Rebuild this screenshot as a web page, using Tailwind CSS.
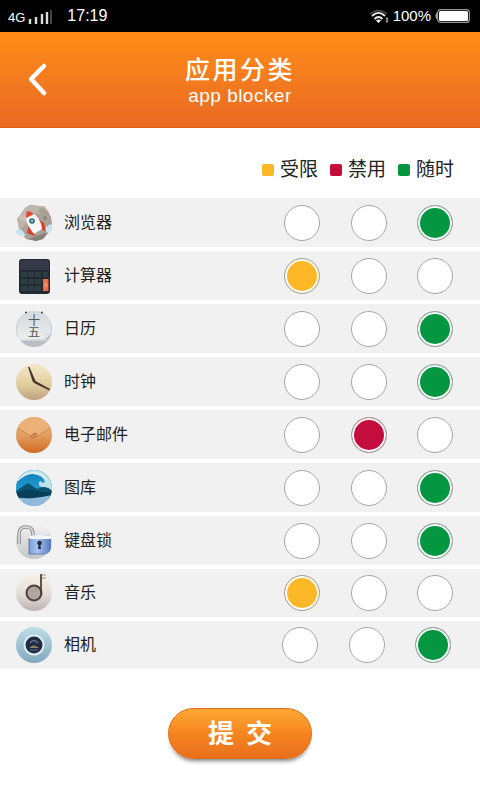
<!DOCTYPE html>
<html lang="zh-CN">
<head>
    <meta charset="UTF-8">
    <meta name="viewport" content="width=device-width, initial-scale=1.0">
    <title>应用分类</title>
    <script src="https://cdn.jsdelivr.net/npm/@tailwindcss/browser@4"></script>
</head>
<body class="min-h-screen bg-white font-['Liberation_Sans','Noto_Sans_CJK_SC',sans-serif] text-[#222]">

    <!-- Status bar -->
    <div class="flex h-8 items-center justify-between bg-black pl-2 pr-[10px] text-white">
        <div class="flex items-center">
            <span class="pt-1 text-[13px] leading-4">4G</span>
            <svg class="ml-[3px] h-4 w-6" viewBox="0 0 24 16">
                <path d="M2 16V11M8 16V9M14 16V6M19 16V4" stroke="#ddd" stroke-width="2.4"></path>
                <path d="M23 16V2" stroke="#555" stroke-width="1.6"></path>
            </svg>
            <span class="ml-[15px] text-base leading-5">17:19</span>
        </div>
        <div class="flex items-center">
            <svg class="h-[14px] w-5" viewBox="0 0 20 14" fill="none">
                <path d="M1 5Q9.500 -2 18 5" stroke="#555" stroke-width="1.500"></path>
                <path d="M3 7Q9.500 .800 16 7" stroke="#eee" stroke-width="1.800"></path>
                <path d="M5.500 10Q9.500 6 13.500 10" stroke="#eee" stroke-width="1.800"></path>
                <path d="M7 11.500Q9.500 9.500 12 11.500L9.500 14Z" fill="#fff"></path>
                <path d="M16.500 10.500L18 8L19.500 10.500ZM16.500 11.500L18 14L19.500 11.500Z" fill="#ccc"></path>
            </svg>
            <span class="ml-1 text-[15px] leading-5">100%</span>
            <svg class="ml-1 h-[14px] w-[35px]" viewBox="0 0 35 14">
                <path d="M3 4H1.500Q.500 4 .500 7T1.500 10H3Z" fill="#aaa"></path>
                <rect x="2.600" y=".6" width="31.800" height="12.800" rx="3" fill="none" stroke="#999" stroke-width="1.200"></rect>
                <rect x="4" y="2" width="29" height="10" rx="1.500" fill="#fff"></rect>
            </svg>
        </div>
    </div>

    <!-- Header -->
    <header class="grid h-24 grid-cols-[1fr_auto_1fr] items-center border-b border-[#e05f14] bg-linear-to-b from-[#ff8c17] to-[#e96a23] text-white">
        <button type="button" aria-label="返回" class="ml-6 w-7">
            <svg class="h-9 w-7" viewBox="0 0 28 36" fill="none" stroke="#fff" stroke-width="4.500" stroke-linecap="round" stroke-linejoin="round"><path d="M20 4L7 17L20 31"></path></svg>
        </button>
        <div class="pt-1 text-center">
            <h1 class="text-[25px] leading-7 font-medium tracking-widest">应用分类</h1>
            <p class="text-[19px] leading-6 tracking-wide">app blocker</p>
        </div>
    </header>

    <main>
        <!-- Legend -->
        <div class="flex h-[70px] items-center justify-end gap-3 pr-[26px] pt-[14px] text-[19px] leading-7">
            <span class="flex items-center gap-1.5"><i class="size-3 rounded-xs bg-[#fdb827]"></i>受限</span>
            <span class="flex items-center gap-1.5"><i class="size-3 rounded-xs bg-[#c40d3c]"></i>禁用</span>
            <span class="flex items-center gap-1.5"><i class="size-3 rounded-xs bg-[#049641]"></i>随时</span>
        </div>

        <form>
            <div class="flex flex-col gap-1">
                <div role="radiogroup" class="flex h-[49px] items-center justify-between bg-[#f1f1f1] pl-4 pr-[27px]" aria-label="浏览器">
                    <div class="flex items-center gap-3">
                        <svg class="size-9" viewBox="0 0 36 36">
                            <path d="M9 3L14 0L23 1L28 1L32 6L35 12L36 19L33 27L27 34L20 36L10 34L6 29L3 26L3 20L1 14L5 9Z" fill="#aaa198"></path>
                            <path d="M9 3L14 0L23 1L28 1L31 5L26 9L18 8L12 15L8 22L3 24L1 14L5 9Z" fill="#beb5aa"></path>
                            <circle cx="26" cy="6" r="3" fill="#a89e92"></circle><circle cx="7" cy="13" r="3" fill="#cac1b6"></circle><circle cx="29" cy="13" r="2" fill="#8f877f"></circle><path d="M12 34L26 29L33 26L27 34L20 36Z" fill="#88817b"></path>
                            <path d="M0 28Q0 24 4 24Q7 25 8 28Q10 29 9 31L4 31ZM29 25Q29 21 32 21Q33 18 36 20V25Q32 29 29 27Z" fill="#c9e3ec"></path>
                            <path d="M13 19L11 28L19 31L18 26ZM22 14L28 18L30 27L24 23Z" fill="#dc3d28"></path>
                            <path d="M11 6Q18 7 22 13Q26 19 26 24L18 29Q12 22 10 15Q10 10 11 6Z" fill="#f6f6f6"></path>
                            <path d="M11 6Q15 6 18 9L10 13Q10 9 11 6Z" fill="#e2432d"></path>
                            <circle cx="16" cy="16" r="2.800" fill="#315c71"></circle><circle cx="16" cy="16" r="1.400" fill="#8ec0d2"></circle>
                        </svg>
                        <span class="text-base leading-6">浏览器</span>
                    </div>
                    <div class="flex w-[169px] justify-between">
                        <input type="radio" name="browser" aria-label="受限" class="size-9 appearance-none rounded-full border border-[#a6a6a6] bg-white checked:bg-[#fdb827] checked:shadow-[inset_0_0_0_2px_#fff]">
                        <input type="radio" name="browser" aria-label="禁用" class="size-9 appearance-none rounded-full border border-[#a6a6a6] bg-white checked:bg-[#c40d3c] checked:shadow-[inset_0_0_0_2px_#fff]">
                        <input type="radio" name="browser" aria-label="随时" checked class="size-9 appearance-none rounded-full border border-[#a6a6a6] bg-white checked:bg-[#049641] checked:shadow-[inset_0_0_0_2px_#fff]">
                    </div>
                </div>

                <div role="radiogroup" class="flex h-[49px] items-center justify-between bg-[#f1f1f1] pl-4 pr-[27px]" aria-label="计算器">
                    <div class="flex items-center gap-3">
                        <svg class="size-9" viewBox="0 0 36 36">
                            <rect x="3" y="1" width="31" height="35" rx="3" fill="#202b32"></rect>
                            <path d="M4 12V5Q4 2 7 2H30Q33 2 33 5V12Z" fill="#353849"></path>
                            <path d="M5 14H11V19H5ZM12 14H18V19H12ZM19 14H25V19H19ZM27 14H32V19H27ZM5 21H11V26H5ZM12 21H18V26H12ZM19 21H25V26H19ZM5 28H11V33H5ZM12 28H18V33H12ZM19 28H25V33H19Z" fill="#2d3d43"></path>
                            <rect x="27" y="21" width="5.500" height="12" fill="#f26b43"></rect>
                            <path d="M28.500 26H31M28.500 28H31" stroke="#ffd3bf" stroke-width=".8"></path>
                        </svg>
                        <span class="text-base leading-6">计算器</span>
                    </div>
                    <div class="flex w-[169px] justify-between">
                        <input type="radio" name="calculator" aria-label="受限" checked class="size-9 appearance-none rounded-full border border-[#a6a6a6] bg-white checked:bg-[#fdb827] checked:shadow-[inset_0_0_0_2px_#fff]">
                        <input type="radio" name="calculator" aria-label="禁用" class="size-9 appearance-none rounded-full border border-[#a6a6a6] bg-white checked:bg-[#c40d3c] checked:shadow-[inset_0_0_0_2px_#fff]">
                        <input type="radio" name="calculator" aria-label="随时" class="size-9 appearance-none rounded-full border border-[#a6a6a6] bg-white checked:bg-[#049641] checked:shadow-[inset_0_0_0_2px_#fff]">
                    </div>
                </div>

                <div role="radiogroup" class="flex h-[49px] items-center justify-between bg-[#f1f1f1] pl-4 pr-[27px]" aria-label="日历">
                    <div class="flex items-center gap-3">
                        <svg class="size-9" viewBox="0 0 36 36">
                            <defs><linearGradient id="cal" x2="0" y2="1"><stop stop-color="#d3d8dd"></stop><stop offset="1" stop-color="#eceeef"></stop></linearGradient></defs>
                            <circle cx="18" cy="18" r="18" fill="#b9bfc4"></circle>
                            <path d="M2.500 27Q-2 16 4 7Q9 0 18 0T32 7Q37 15 34.500 23L30 28L4 29Z" fill="url(#cal)"></path>
                            <path d="M30 28L30 23L34.500 23Z" fill="#fafafa" stroke="#aaa" stroke-width=".5"></path>
                            <path d="M3 29H31" stroke="#e4e7e9" stroke-width="1"></path>
                            <circle cx="10" cy="1.500" r="1" fill="#444"></circle><circle cx="26" cy="1.500" r="1" fill="#444"></circle>
                            <text x="18" y="3" writing-mode="vertical-rl" font-size="12" font-family="Noto Sans CJK SC" fill="#555">十五</text>
                        </svg>
                        <span class="text-base leading-6">日历</span>
                    </div>
                    <div class="flex w-[169px] justify-between">
                        <input type="radio" name="calendar" aria-label="受限" class="size-9 appearance-none rounded-full border border-[#a6a6a6] bg-white checked:bg-[#fdb827] checked:shadow-[inset_0_0_0_2px_#fff]">
                        <input type="radio" name="calendar" aria-label="禁用" class="size-9 appearance-none rounded-full border border-[#a6a6a6] bg-white checked:bg-[#c40d3c] checked:shadow-[inset_0_0_0_2px_#fff]">
                        <input type="radio" name="calendar" aria-label="随时" checked class="size-9 appearance-none rounded-full border border-[#a6a6a6] bg-white checked:bg-[#049641] checked:shadow-[inset_0_0_0_2px_#fff]">
                    </div>
                </div>

                <div role="radiogroup" class="flex h-[49px] items-center justify-between bg-[#f1f1f1] pl-4 pr-[27px]" aria-label="时钟">
                    <div class="flex items-center gap-3">
                        <svg class="size-9" viewBox="0 0 36 36">
                            <defs><linearGradient id="clk" x2="0" y2="1"><stop stop-color="#f3e8c8"></stop><stop offset=".55" stop-color="#e2cfa0"></stop><stop offset="1" stop-color="#bfa180"></stop></linearGradient></defs>
                            <circle cx="18" cy="18" r="18" fill="url(#clk)"></circle>
                            <path d="M12 3L13.500 3L19.500 17L34 25L33.500 26.500L18 19L16.500 17Z" fill="#46352c"></path>
                        </svg>
                        <span class="text-base leading-6">时钟</span>
                    </div>
                    <div class="flex w-[169px] justify-between">
                        <input type="radio" name="clock" aria-label="受限" class="size-9 appearance-none rounded-full border border-[#a6a6a6] bg-white checked:bg-[#fdb827] checked:shadow-[inset_0_0_0_2px_#fff]">
                        <input type="radio" name="clock" aria-label="禁用" class="size-9 appearance-none rounded-full border border-[#a6a6a6] bg-white checked:bg-[#c40d3c] checked:shadow-[inset_0_0_0_2px_#fff]">
                        <input type="radio" name="clock" aria-label="随时" checked class="size-9 appearance-none rounded-full border border-[#a6a6a6] bg-white checked:bg-[#049641] checked:shadow-[inset_0_0_0_2px_#fff]">
                    </div>
                </div>

                <div role="radiogroup" class="flex h-[49px] items-center justify-between bg-[#f1f1f1] pl-4 pr-[27px]" aria-label="电子邮件">
                    <div class="flex items-center gap-3">
                        <svg class="size-9" viewBox="0 0 36 36">
                            <defs><linearGradient id="mail" x2="0" y2="1"><stop stop-color="#e5a469"></stop><stop offset=".5" stop-color="#e2a062"></stop><stop offset="1" stop-color="#cf6a20"></stop></linearGradient></defs>
                            <circle cx="18" cy="18" r="18" fill="url(#mail)"></circle>
                            <path d="M2 11Q8 0 18 0T34 11L20 19Q18 20.500 16 19Z" fill="#ebb178"></path>
                            <path d="M2 11L16 20Q18 21 20 20L34 11" fill="none" stroke="#ca8448" stroke-width=".7"></path>
                            <ellipse cx="18" cy="18.500" rx="3.500" ry="2" transform="rotate(-35 18 18.500)" fill="#b9783f"></ellipse>
                            <path d="M16 19.500L20 17.500" stroke="#edbe8e" stroke-width=".8"></path>
                        </svg>
                        <span class="text-base leading-6">电子邮件</span>
                    </div>
                    <div class="flex w-[169px] justify-between">
                        <input type="radio" name="mail" aria-label="受限" class="size-9 appearance-none rounded-full border border-[#a6a6a6] bg-white checked:bg-[#fdb827] checked:shadow-[inset_0_0_0_2px_#fff]">
                        <input type="radio" name="mail" aria-label="禁用" checked class="size-9 appearance-none rounded-full border border-[#a6a6a6] bg-white checked:bg-[#c40d3c] checked:shadow-[inset_0_0_0_2px_#fff]">
                        <input type="radio" name="mail" aria-label="随时" class="size-9 appearance-none rounded-full border border-[#a6a6a6] bg-white checked:bg-[#049641] checked:shadow-[inset_0_0_0_2px_#fff]">
                    </div>
                </div>

                <div role="radiogroup" class="flex h-[49px] items-center justify-between bg-[#f1f1f1] pl-4 pr-[27px]" aria-label="图库">
                    <div class="flex items-center gap-3">
                        <svg class="size-9" viewBox="0 0 36 36">
                            <defs><clipPath id="pic"><circle cx="18" cy="18" r="18"></circle></clipPath><linearGradient id="sky" x2="0" y2="1"><stop stop-color="#117fc0"></stop><stop offset="1" stop-color="#29a4cf"></stop></linearGradient></defs>
                            <g clip-path="url(#pic)">
                                <rect width="36" height="36" fill="#8eb9dc"></rect>
                                <rect width="36" height="27" fill="url(#sky)"></rect>
                                <path d="M0 12Q6 3 17 4Q27 5 29 12L26 13Q26 10 23 12Q22 16 26 17Q32 17 36 24V0H0Z" fill="#bfe1e8"></path>
                                <path d="M1 11Q10 2 19 3Q27 4 31 10" fill="none" stroke="#e2f2f3" stroke-width="1.500"></path>
                                <path d="M0 21L12 13L21 19L27 17Q33 17 36 21V28H0Z" fill="#0d526f"></path>
                                <path d="M0 23L12 19L24 22L36 22V29H0Z" fill="#073f5a"></path>
                                <path d="M0 27Q9 29 18 28T36 25V36H0Z" fill="#91b9db"></path>
                            </g>
                        </svg>
                        <span class="text-base leading-6">图库</span>
                    </div>
                    <div class="flex w-[169px] justify-between">
                        <input type="radio" name="gallery" aria-label="受限" class="size-9 appearance-none rounded-full border border-[#a6a6a6] bg-white checked:bg-[#fdb827] checked:shadow-[inset_0_0_0_2px_#fff]">
                        <input type="radio" name="gallery" aria-label="禁用" class="size-9 appearance-none rounded-full border border-[#a6a6a6] bg-white checked:bg-[#c40d3c] checked:shadow-[inset_0_0_0_2px_#fff]">
                        <input type="radio" name="gallery" aria-label="随时" checked class="size-9 appearance-none rounded-full border border-[#a6a6a6] bg-white checked:bg-[#049641] checked:shadow-[inset_0_0_0_2px_#fff]">
                    </div>
                </div>

                <div role="radiogroup" class="flex h-[49px] items-center justify-between bg-[#f1f1f1] pl-4 pr-[27px]" aria-label="键盘锁">
                    <div class="flex items-center gap-3">
                        <svg class="size-9" viewBox="0 0 36 36">
                            <defs><linearGradient id="lockbg" x2="0" y2="1"><stop stop-color="#f4f4f4"></stop><stop offset="1" stop-color="#c3c4c6"></stop></linearGradient><linearGradient id="lock" x2="1"><stop stop-color="#7c9edc"></stop><stop offset=".4" stop-color="#a9c4f2"></stop><stop offset="1" stop-color="#5576ba"></stop></linearGradient></defs>
                            <circle cx="18" cy="18" r="18" fill="url(#lockbg)"></circle>
                            <path d="M3 21V11Q3 4 10 4T17 11V14" fill="none" stroke="#868686" stroke-width="3.500"></path>
                            <path d="M3 21V11Q3 4 10 4T17 11V14" fill="none" stroke="#d6d6d6" stroke-width="1.800"></path>
                            <path d="M13 13Q24 11 35 13V26Q33 31 29 31H13Z" fill="url(#lock)"></path>
                            <path d="M13 13Q24 11 35 13V16H13Z" fill="#f3f6fb"></path>
                            <path d="M13 15V31H29" fill="none" stroke="#50699b" stroke-width=".8"></path>
                            <circle cx="23.500" cy="20" r="2.300" fill="#222b40"></circle><path d="M23 20L22 26H25L24 20Z" fill="#222b40"></path>
                        </svg>
                        <span class="text-base leading-6">键盘锁</span>
                    </div>
                    <div class="flex w-[169px] justify-between">
                        <input type="radio" name="keylock" aria-label="受限" class="size-9 appearance-none rounded-full border border-[#a6a6a6] bg-white checked:bg-[#fdb827] checked:shadow-[inset_0_0_0_2px_#fff]">
                        <input type="radio" name="keylock" aria-label="禁用" class="size-9 appearance-none rounded-full border border-[#a6a6a6] bg-white checked:bg-[#c40d3c] checked:shadow-[inset_0_0_0_2px_#fff]">
                        <input type="radio" name="keylock" aria-label="随时" checked class="size-9 appearance-none rounded-full border border-[#a6a6a6] bg-white checked:bg-[#049641] checked:shadow-[inset_0_0_0_2px_#fff]">
                    </div>
                </div>

                <div role="radiogroup" class="flex h-12 items-center justify-between bg-[#f1f1f1] pl-4 pr-[27px]" aria-label="音乐">
                    <div class="flex items-center gap-3">
                        <svg class="size-9 overflow-visible" viewBox="0 0 36 36">
                            <defs><linearGradient id="mus" x2="0" y2="1"><stop stop-color="#f7f0e6"></stop><stop offset=".5" stop-color="#e5dfdb"></stop><stop offset="1" stop-color="#bdb4b0"></stop></linearGradient></defs>
                            <circle cx="18" cy="18" r="18" fill="url(#mus)"></circle>
                            <circle cx="18" cy="18" r="7.500" fill="#aaa19c" stroke="#544139" stroke-width="2"></circle>
                            <path d="M12 18H24M14 14V22M18 12V24M22 14V22" stroke="#c2bab4" stroke-width=".7"></path>
                            <path d="M25 20V-1" stroke="#544139" stroke-width="1.800"></path>
                            <path d="M26 0H30M26 3H30" stroke="#a58c80" stroke-width="1"></path>
                        </svg>
                        <span class="text-base leading-6">音乐</span>
                    </div>
                    <div class="flex w-[169px] justify-between">
                        <input type="radio" name="music" aria-label="受限" checked class="size-9 appearance-none rounded-full border border-[#a6a6a6] bg-white checked:bg-[#fdb827] checked:shadow-[inset_0_0_0_2px_#fff]">
                        <input type="radio" name="music" aria-label="禁用" class="size-9 appearance-none rounded-full border border-[#a6a6a6] bg-white checked:bg-[#c40d3c] checked:shadow-[inset_0_0_0_2px_#fff]">
                        <input type="radio" name="music" aria-label="随时" class="size-9 appearance-none rounded-full border border-[#a6a6a6] bg-white checked:bg-[#049641] checked:shadow-[inset_0_0_0_2px_#fff]">
                    </div>
                </div>

                <div role="radiogroup" class="flex h-12 items-center justify-between bg-[#f1f1f1] pl-4 pr-[29px]" aria-label="相机">
                    <div class="flex items-center gap-3">
                        <svg class="size-9" viewBox="0 0 36 36">
                            <defs><linearGradient id="cam" x2="0" y2="1"><stop stop-color="#bfdde7"></stop><stop offset="1" stop-color="#83a9bf"></stop></linearGradient></defs>
                            <circle cx="18" cy="18" r="18" fill="url(#cam)"></circle>
                            <circle cx="18" cy="18" r="10.500" fill="#e5eef2"></circle>
                            <circle cx="18" cy="18" r="8.500" fill="#202c45"></circle>
                            <path d="M14 16Q18 11 22 16" fill="none" stroke="#5c7196" stroke-width="1.500"></path>
                            <path d="M13 21Q18 16 23 21Z" fill="#94845f"></path><path d="M14 23H22" stroke="#56677f" stroke-width="1"></path>
                        </svg>
                        <span class="text-base leading-6">相机</span>
                    </div>
                    <div class="flex w-[169px] justify-between">
                        <input type="radio" name="camera" aria-label="受限" class="size-9 appearance-none rounded-full border border-[#a6a6a6] bg-white checked:bg-[#fdb827] checked:shadow-[inset_0_0_0_2px_#fff]">
                        <input type="radio" name="camera" aria-label="禁用" class="size-9 appearance-none rounded-full border border-[#a6a6a6] bg-white checked:bg-[#c40d3c] checked:shadow-[inset_0_0_0_2px_#fff]">
                        <input type="radio" name="camera" aria-label="随时" checked class="size-9 appearance-none rounded-full border border-[#a6a6a6] bg-white checked:bg-[#049641] checked:shadow-[inset_0_0_0_2px_#fff]">
                    </div>
                </div>
            </div>

            <div class="flex justify-center pt-[39px]">
                <button type="submit" class="flex h-[51px] w-36 items-center justify-center gap-3 rounded-full border border-[#dc6a18] bg-linear-to-b from-[#ffa833] via-[#f68520] to-[#ea6f1c] text-[26px] leading-8 font-bold text-white shadow-[0_5px_4px_-3px_rgba(0,0,0,0.5)]"><span>提</span><span>交</span></button>
            </div>
        </form>
    </main>

</body>
</html>
